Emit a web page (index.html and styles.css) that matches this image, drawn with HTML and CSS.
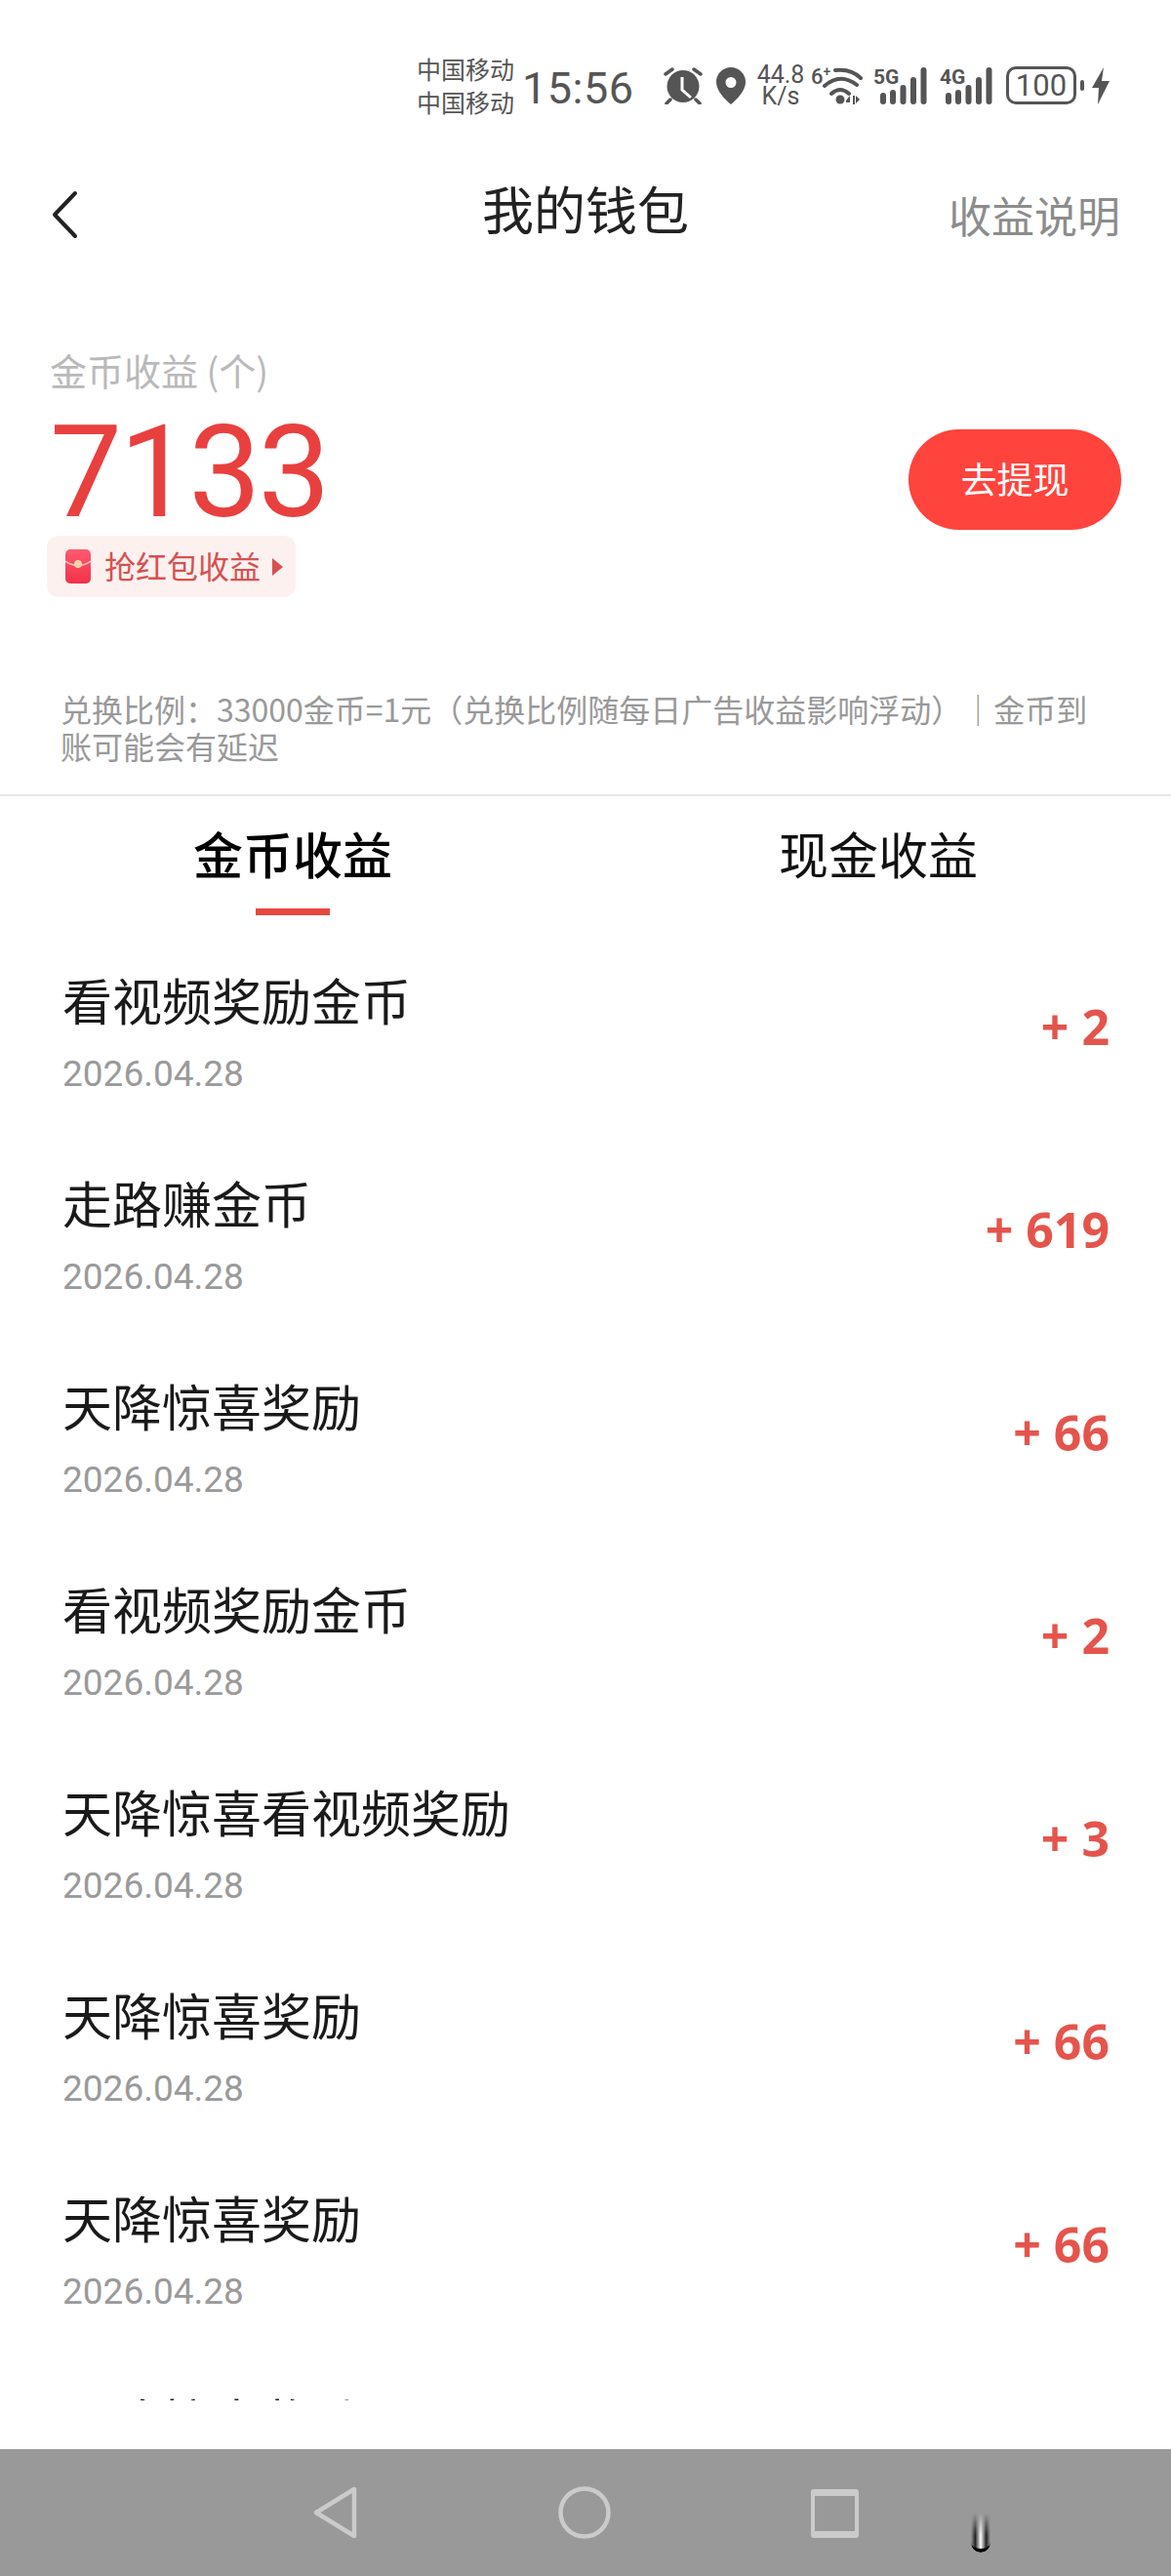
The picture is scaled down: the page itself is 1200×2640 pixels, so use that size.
FILE: index.html
```html
<!DOCTYPE html>
<html lang="zh-CN">
<head>
<meta charset="utf-8">
<title>我的钱包</title>
<link rel="stylesheet" href="styles.css">
</head>
<body>
<div class="phone">
  <div class="status">
    <div class="carriers"><span>中国移动</span><span>中国移动</span></div>
    <div class="clock">15:56</div>
    <svg class="ic-alarm" viewBox="0 0 40 38"><circle cx="20" cy="19.500" r="16.500" fill="#555"/><path d="M19 10v13l9 8" fill="none" stroke="#fff" stroke-width="3"/><path d="M2 7l7-5M31 2l7 5M7 33l-4 4M33 33l4 4" stroke="#555" stroke-width="3.500" stroke-linecap="round"/></svg>
    <svg class="ic-pin" viewBox="0 0 30 38"><path fill-rule="evenodd" fill="#555" d="M15 0C6.700 0 0 6.700 0 15c0 9 9 18 15 23 6-5 15-14 15-23C30 6.700 23.300 0 15 0zm0 10a5.500 5.500 0 1 1 0 11 5.500 5.500 0 0 1 0-11z"/></svg>
    <div class="speed"><span>44.8</span><span>K/s</span></div>
    <div class="wifi">
      <span class="wifi-six">6<sup>+</sup></span>
      <svg class="ic-wifi" viewBox="0 0 42 38"><path d="M14 3Q30 1 40 11M3 19Q19 5 36 18M10 27Q19 19 28 27" fill="none" stroke="#555" stroke-width="4" stroke-linecap="round"/><circle cx="19" cy="33" r="4.500" fill="#555"/><path d="M25 34l4-5v7h-4zM32 29v9h2v-9zM35 29v8l4-4z" fill="#555"/></svg>
    </div>
    <div class="sig">
      <span class="sig-label">5G</span>
      <svg class="ic-bars" viewBox="0 0 48 38"><path d="M3 29v6M13 26v9M23.500 21v14M34 13v22M44.500 3v32" stroke="#555" stroke-width="6" stroke-linecap="round"/></svg>
    </div>
    <div class="sig sig-b">
      <span class="sig-label">4G</span>
      <svg class="ic-bars" viewBox="0 0 48 38"><path d="M3 29v6M13 26v9M23.500 21v14M34 13v22M44.500 3v32" stroke="#555" stroke-width="6" stroke-linecap="round"/></svg>
    </div>
    <div class="battery"><span>100</span></div>
    <div class="nub"></div>
    <svg class="ic-bolt" viewBox="0 0 20 38"><path fill="#555" d="M13 0L1 21h7L7 38l12-24h-8z"/></svg>
  </div>

  <div class="nav">
    <svg class="ic-back" viewBox="0 0 28 50"><path d="M25 3L4 25l21 22" fill="none" stroke="#222" stroke-width="4" stroke-linecap="round" stroke-linejoin="round"/></svg>
    <div class="nav-title">我的钱包</div>
    <div class="nav-help">收益说明</div>
  </div>

  <div class="summary">
    <div class="summary-left">
      <div class="coin-label">金币收益 (个)</div>
      <div class="coin-value">7133</div>
      <div class="packet">
        <svg class="ic-packet" viewBox="0 0 26 35">
          <defs><linearGradient id="pk" x1="0" y1="0" x2="0" y2="1"><stop offset="0" stop-color="#ff5b72"/><stop offset="1" stop-color="#f23048"/></linearGradient></defs>
          <rect width="26" height="35" rx="5" fill="url(#pk)"/>
          <path d="M0 12q13 9 26 0" fill="none" stroke="#ffc4c4" stroke-width="1.500"/>
          <circle cx="13" cy="15" r="4" fill="#f9d2a6"/>
        </svg>
        <span>抢红包收益</span>
        <i class="packet-arrow"></i>
      </div>
    </div>
    <div class="withdraw">去提现</div>
  </div>

  <p class="note">兑换比例：33000金币=1元（兑换比例随每日广告收益影响浮动）｜金币到账可能会有延迟</p>

  <div class="tabs">
    <div class="tab tab-on">金币收益</div>
    <div class="tab">现金收益</div>
  </div>

  <div class="list">
    <div class="row"><div><div class="row-title">看视频奖励金币</div><div class="row-date">2026.04.28</div></div><div class="row-num">+ 2</div></div>
    <div class="row"><div><div class="row-title">走路赚金币</div><div class="row-date">2026.04.28</div></div><div class="row-num">+ 619</div></div>
    <div class="row"><div><div class="row-title">天降惊喜奖励</div><div class="row-date">2026.04.28</div></div><div class="row-num">+ 66</div></div>
    <div class="row"><div><div class="row-title">看视频奖励金币</div><div class="row-date">2026.04.28</div></div><div class="row-num">+ 2</div></div>
    <div class="row"><div><div class="row-title">天降惊喜看视频奖励</div><div class="row-date">2026.04.28</div></div><div class="row-num">+ 3</div></div>
    <div class="row"><div><div class="row-title">天降惊喜奖励</div><div class="row-date">2026.04.28</div></div><div class="row-num">+ 66</div></div>
    <div class="row"><div><div class="row-title">天降惊喜奖励</div><div class="row-date">2026.04.28</div></div><div class="row-num">+ 66</div></div>
    <div class="row row-cut"><div class="row-title">天降惊喜奖励</div></div>
  </div>

  <div class="sysnav">
    <svg class="ic-sys-back" viewBox="0 0 48 56"><path d="M44 4v48L5 28z" fill="none" stroke="#cbcbcb" stroke-width="4.500" stroke-linejoin="round"/></svg>
    <svg class="ic-sys-home" viewBox="0 0 54 54"><circle cx="27" cy="27" r="24.500" fill="none" stroke="#cbcbcb" stroke-width="4.500"/></svg>
    <svg class="ic-sys-recent" viewBox="0 0 49 50"><path fill="#cbcbcb" fill-rule="evenodd" d="M3 0h43a3 3 0 0 1 3 3v44a3 3 0 0 1-3 3H3a3 3 0 0 1-3-3V3a3 3 0 0 1 3-3zm1 7v36h41V7z"/></svg>
    <div class="scrub"></div>
  </div>
</div>
</body>
</html>
```
FILE: styles.css
```css
* { box-sizing: border-box; }
html, body { margin: 0; padding: 0; background: #fff; }
body { font-family: "Noto Sans CJK SC", Roboto, sans-serif; }
.phone { width: 1200px; height: 2640px; display: flex; flex-direction: column; overflow: hidden; background: #fff; position: relative; }

.status { height: 130px; padding: 52px 0 0 427px; display: flex; align-items: flex-start; color: #555; flex: none; }
.carriers { display: flex; flex-direction: column; font-size: 25px; line-height: 34px; width: 100px; margin-top: 1px; white-space: nowrap; }
.clock { font-family: Roboto, sans-serif; font-size: 45px; line-height: 72px; width: 145px; margin-left: 8px; margin-top: 3px; letter-spacing: .5px; }
.ic-alarm { width: 40px; height: 38px; margin-top: 17px; flex: none; }
.ic-pin { width: 30px; height: 38px; margin-top: 17px; margin-left: 14px; flex: none; }
.speed { display: flex; flex-direction: column; align-items: center; width: 50px; margin-left: 11px; margin-top: 14px; font-family: Roboto, sans-serif; font-size: 25px; line-height: 22px; white-space: nowrap; }
.wifi { display: flex; width: 53px; margin-left: 6px; margin-top: 17px; }
.wifi-six { font-family: Roboto, sans-serif; font-size: 22px; font-weight: 500; line-height: 20px; width: 11px; flex: none; white-space: nowrap; }
.wifi-six sup { font-size: 14px; line-height: 0; }
.ic-wifi { width: 42px; height: 38px; flex: none; }
.sig { display: flex; position: relative; width: 55px; height: 38px; margin-left: 11px; margin-top: 17px; justify-content: flex-end; }
.sig-b { width: 54px; margin-left: 13px; }
.sig-label { position: absolute; left: 0; top: 0; font-family: Roboto, sans-serif; font-size: 21px; line-height: 20px; font-weight: 700; }
.ic-bars { width: 48px; height: 38px; flex: none; }
.battery { width: 72px; height: 39px; border: 3.500px solid #555; border-radius: 10px; margin-left: 14px; margin-top: 16px; display: flex; align-items: center; justify-content: center; font-family: Roboto, sans-serif; font-size: 31px; line-height: 1; }
.nub { width: 4px; height: 11px; background: #555; border-radius: 2px; margin: 30px 0 0 4px; }
.ic-bolt { width: 20px; height: 38px; margin: 17px 0 0 7px; flex: none; }

.nav { height: 180px; display: grid; grid-template-columns: 1fr auto 1fr; align-items: center; flex: none; padding: 0 52px; }
.ic-back { width: 28px; height: 50px; }
.nav-title { font-size: 53px; line-height: 76px; color: #222; padding-bottom: 14px; }
.nav-help { font-size: 44px; line-height: 64px; color: #8c8c8c; justify-self: end; }

.summary { height: 397px; padding: 49px 51px 0 51px; display: flex; justify-content: space-between; flex: none; }
.summary-left { display: flex; flex-direction: column; align-items: flex-start; }
.coin-label { font-size: 38px; line-height: 40px; color: #b9b9b9; white-space: nowrap; }
.coin-value { font-family: Roboto, sans-serif; font-size: 132px; line-height: 120px; color: #e8403f; margin-top: 25px; letter-spacing: -3px; }
.packet { height: 63px; width: 255px; margin-left: -3px; margin-top: 5px; background: #fdf1f0; border-radius: 12px; display: flex; align-items: center; padding-left: 19px; color: #d8504f; font-size: 32px; }
.packet span { white-space: nowrap; line-height: 60px; padding-bottom: 3px; }
.ic-packet { width: 26px; height: 35px; flex: none; margin-right: 14px; }
.packet-arrow { width: 0; height: 0; border-left: 11px solid #d8504f; border-top: 9px solid transparent; border-bottom: 9px solid transparent; margin-left: 12px; }
.withdraw { width: 218px; height: 103px; margin-top: 81px; padding-bottom: 4px; border-radius: 52px; background: #ff433d; color: #fff; font-size: 37px; display: flex; align-items: center; justify-content: center; }

.note { margin: 0; padding: 0 80px 0 62px; height: 109px; font-size: 32px; line-height: 38px; color: #999; border-bottom: 2px solid #e6e6e6; flex: none; }
.tabs { display: grid; grid-template-columns: 600px 600px; height: 138px; flex: none; }
.tab { position: relative; text-align: center; font-size: 51px; line-height: 116px; color: #111; }
.tab-on { font-weight: 500; color: #000; }
.tab-on::after { content: ""; position: absolute; left: 262px; width: 76px; height: 7px; bottom: 16px; background: #e8473f; }

.list { height: 1506px; flex: none; overflow: hidden; }
.row { height: 208px; padding: 0 63px 0 64px; display: flex; justify-content: space-between; align-items: center; }
.row-cut { align-items: flex-start; padding-top: 33px; }
.row-title { font-size: 51px; line-height: 74px; color: #1a1a1a; white-space: nowrap; }
.row-date { font-family: Roboto, sans-serif; font-size: 37px; line-height: 56px; color: #9a9a9a; margin-top: 12px; }
.row-num { font-family: "Open Sans", sans-serif; font-size: 50px; font-weight: 700; color: #e5544c; white-space: nowrap; margin-bottom: 12px; }

.sysnav { height: 130px; margin-top: auto; background: #999; flex: none; display: flex; align-items: flex-start; position: relative; padding-left: 319px; }
.ic-sys-back { width: 48px; height: 56px; margin-top: 37px; }
.ic-sys-home { width: 54px; height: 54px; margin-top: 38px; margin-left: 205px; }
.ic-sys-recent { width: 49px; height: 50px; margin-top: 41px; margin-left: 205px; }
.scrub { position: absolute; left: 995px; top: 66px; width: 20px; height: 40px; border-radius: 0 0 10px 10px; border-bottom: 4px solid #000; background: linear-gradient(90deg, #999 0, #222 22%, #fff 50%, #222 78%, #999 100%); -webkit-mask-image: linear-gradient(180deg, transparent 0, #000 55%); mask-image: linear-gradient(180deg, transparent 0, #000 55%); }
```
